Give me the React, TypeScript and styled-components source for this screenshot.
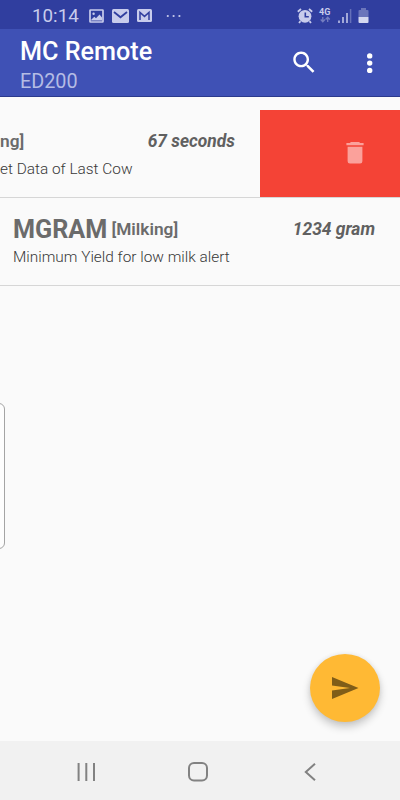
import React from "react";
import styled, { createGlobalStyle } from "styled-components";

const GlobalStyle = createGlobalStyle`
  * { box-sizing: border-box; }
  body { margin: 0; background: #fafafa; font-family: Roboto, sans-serif; }
`;

const Screen = styled.div`
  position: relative;
  width: 400px;
  height: 800px;
  display: flex;
  flex-direction: column;
  overflow: hidden;
  background: #fafafa;
`;

const StatusBar = styled.div`
  height: 29px;
  flex: none;
  display: flex;
  align-items: center;
  justify-content: space-between;
  padding: 2px 31px 0 32px;
  background: #303e9f;
  color: #c8ccec;
`;

const StatusGroup = styled.div`
  display: flex;
  align-items: center;
`;

const Clock = styled.span`
  width: 57px;
  font-size: 18.8px;
  line-height: 22px;
  white-space: nowrap;
`;

const Header = styled.header`
  height: 68px;
  flex: none;
  display: flex;
  justify-content: space-between;
  padding: 0 18px 0 20px;
  background: #3f51b5;
  border-bottom: 1px solid #2b3a8c;
`;

const Titles = styled.div`
  padding-top: 8px;
`;

const Title = styled.h1`
  margin: 0;
  font-size: 25.2px;
  line-height: 30px;
  font-weight: 500;
  color: #fff;
`;

const Subtitle = styled.div`
  font-size: 19.8px;
  line-height: 29px;
  color: #b4bce4;
`;

const Actions = styled.div`
  display: flex;
  align-items: center;
  gap: 36px;
`;

const List = styled.main`
  flex: 1;
  padding-top: 13px;
`;

const Row = styled.section`
  height: 88px;
  display: flex;
  border-bottom: 1px solid #d6d6d6;
`;

const Content = styled.div<{ $flush?: boolean }>`
  flex: 1;
  min-width: 0;
  padding: 16px 25px 0 ${(p) => (p.$flush ? 0 : 13)}px;
`;

const Line = styled.div`
  height: 30px;
  display: flex;
  align-items: center;
  line-height: 30px;
  white-space: nowrap;
  font-weight: 700;
  color: #6b6b6b;
`;

const Name = styled.span`
  width: 98.5px;
  padding-top: 2px;
  font-size: 25.2px;
`;

const Group = styled.span`
  font-size: 17.3px;
  font-weight: 600;
`;

const Value = styled.span`
  margin-left: auto;
  font-size: 17.4px;
  font-style: italic;
  color: #606060;
`;

const Description = styled.div`
  font-size: 15.4px;
  font-weight: 300;
  line-height: 27px;
  white-space: nowrap;
  color: #383838;
`;

const DeleteAction = styled.button`
  width: 140px;
  height: 87px;
  flex: none;
  display: flex;
  align-items: center;
  padding: 0 0 0 85px;
  border: 0;
  background: #f44336;
`;

const EdgeHandle = styled.div`
  position: absolute;
  left: -10px;
  top: 403px;
  width: 15px;
  height: 146px;
  border: 1px solid #a4a4a4;
  border-radius: 6px;
  background: #fdfdfd;
`;

const SendButton = styled.button`
  position: absolute;
  left: 310px;
  top: 654px;
  width: 70px;
  height: 68px;
  display: flex;
  align-items: center;
  justify-content: center;
  padding: 0;
  border: 0;
  border-radius: 50%;
  background: #ffb934;
  box-shadow: 0 5px 9px rgba(0, 0, 0, 0.2), 0 0 5px rgba(0, 0, 0, 0.07);
`;

const NavBar = styled.nav`
  height: 59px;
  flex: none;
  display: flex;
  align-items: center;
  gap: 90px;
  padding: 2px 0 0 76px;
  background: #f1f1f1;
`;

const Icon = styled.svg<{ $gap?: number }>`
  display: block;
  flex: none;
  overflow: visible;
  margin-right: ${(p) => p.$gap ?? 0}px;
`;

export default function App() {
  return (
    <Screen>
      <GlobalStyle />
      <StatusBar>
        <StatusGroup>
          <Clock>10:14</Clock>
          <Icon width="15" height="14" $gap={8} viewBox="0 0 15 14" fill="none" stroke="currentColor">
            <rect x="1" y="1" width="13" height="12" rx="0.5" strokeWidth="1.7" />
            <circle cx="4.6" cy="4.7" r="1.2" fill="currentColor" stroke="none" />
            <path d="M2.2 10.8 5.3 7.8 7 9.2 10.5 5.6 13 8.4V11.5H2Z" fill="currentColor" stroke="none" />
          </Icon>
          <Icon width="17" height="14" $gap={8} viewBox="0 0 17 14">
            <rect width="17" height="14" rx="1.5" fill="currentColor" />
            <path d="M2 3 8.5 8.3 15 3" fill="none" stroke="#303e9f" strokeWidth="1.8" />
          </Icon>
          <Icon width="15" height="13" $gap={14} viewBox="0 0 15 13">
            <rect width="15" height="13" rx="1.5" fill="currentColor" />
            <path d="M3 11V3.5L7.5 7.4 12 3.5V11" fill="none" stroke="#303e9f" strokeWidth="1.5" />
          </Icon>
          <Icon width="16" height="4" viewBox="0 0 16 4" fill="currentColor">
            <circle cx="1.8" cy="2" r="1.1" />
            <circle cx="7.6" cy="2" r="1.1" />
            <circle cx="13.4" cy="2" r="1.1" />
          </Icon>
        </StatusGroup>
        <StatusGroup>
          <Icon width="16" height="16" $gap={6} viewBox="0 0 16 16" fill="currentColor">
            <path d="M.8 3.7 4 1M15.2 3.7 12 1M3.5 13.2 2 15M12.5 13.2 14 15" stroke="currentColor" strokeWidth="1.8" />
            <circle cx="8" cy="8.3" r="6.4" />
            <path d="M8.3 4.6V8.7H11.8" fill="none" stroke="#303e9f" strokeWidth="1.6" />
          </Icon>
          <Icon width="12" height="16" $gap={7} viewBox="0 0 12 16">
            <text x="0" y="6.5" fontFamily="Roboto" fontSize="9" fontWeight="700" fill="currentColor">4G</text>
            <path d="M3.8 9V13.5M1.7 11.5 3.8 13.7 5.9 11.5M8.7 14V9.5M6.6 11.5 8.7 9.3 10.8 11.5" fill="none" stroke="#747dc0" strokeWidth="1.3" />
          </Icon>
          <Icon width="14" height="14" $gap={6} viewBox="0 0 14 14">
            <path d="M1 11.5V14M5 8V14M9 4V14" stroke="currentColor" strokeWidth="1.5" />
            <path d="M12.6 0V14" stroke="#6570b9" strokeWidth="1.5" />
          </Icon>
          <Icon width="11" height="15" viewBox="0 0 11 15">
            <path d="M3 0H8V2H9.5Q10.5 2 10.5 3V9H.5V3Q.5 2 1.5 2H3Z" fill="#6b75bb" />
            <path d="M.5 9H10.5V14Q10.5 15 9.5 15H1.5Q.5 15 .5 14Z" fill="#d5d8f0" />
          </Icon>
        </StatusGroup>
      </StatusBar>
      <Header>
        <Titles>
          <Title>MC Remote</Title>
          <Subtitle>ED200</Subtitle>
        </Titles>
        <Actions>
          <Icon width="32" height="32" viewBox="0.3 -0.8 26.4 26.4" fill="#fff">
            <path d="M15.5 14h-.79l-.28-.27C15.41 12.59 16 11.11 16 9.5 16 5.91 13.09 3 9.5 3S3 5.91 3 9.5 5.91 16 9.5 16c1.61 0 3.09-.59 4.23-1.57l.27.28v.79l5 4.99L20.49 19l-4.99-5zm-6 0C7.01 14 5 11.99 5 9.5S7.01 5 9.5 5 14 7.01 14 9.5 11.99 14 9.5 14z" />
          </Icon>
          <Icon width="24" height="32" viewBox="0 0 24 32" fill="#fff">
            <circle cx="11.7" cy="8.9" r="2.7" />
            <circle cx="11.7" cy="16.1" r="2.7" />
            <circle cx="11.7" cy="23.4" r="2.7" />
          </Icon>
        </Actions>
      </Header>
      <List>
        <Row>
          <Content $flush>
            <Line>
              <Group>ng]</Group>
              <Value>67 seconds</Value>
            </Line>
            <Description>et Data of Last Cow</Description>
          </Content>
          <DeleteAction aria-label="Delete">
            <Icon width="20" height="24" viewBox="0 1.4 20 24" fill="#fba19b">
              <path d="M6 1.3H14L15.2 2.5H18.6V4.7H1.4V2.5H4.8ZM2.6 6.2H17.4V20.7Q17.4 23 15.1 23H4.9Q2.6 23 2.6 20.7Z" />
            </Icon>
          </DeleteAction>
        </Row>
        <Row>
          <Content>
            <Line>
              <Name>MGRAM</Name>
              <Group>[Milking]</Group>
              <Value>1234 gram</Value>
            </Line>
            <Description>Minimum Yield for low milk alert</Description>
          </Content>
        </Row>
      </List>
      <NavBar>
        <Icon width="20" height="20" viewBox="0 0 20 20" stroke="#828282" strokeWidth="2">
          <path d="M2.6 1V19M10.3 1V19M18 1V19" />
        </Icon>
        <Icon width="24" height="20" viewBox="0 0 24 20" fill="none" stroke="#828282" strokeWidth="2">
          <rect x="3" y="1" width="18" height="17.5" rx="5" />
        </Icon>
        <Icon width="20" height="20" viewBox="0 0 20 20" fill="none" stroke="#828282" strokeWidth="2">
          <path d="M15 1.8 5.8 10 15 18.2" />
        </Icon>
      </NavBar>
      <EdgeHandle />
      <SendButton aria-label="Send">
        <Icon width="28" height="24" viewBox="0 0 28 24" fill="#805d18">
          <path d="M1 1 27.5 12 1 23V14.5L19 12 1 9.5Z" />
        </Icon>
      </SendButton>
    </Screen>
  );
}
